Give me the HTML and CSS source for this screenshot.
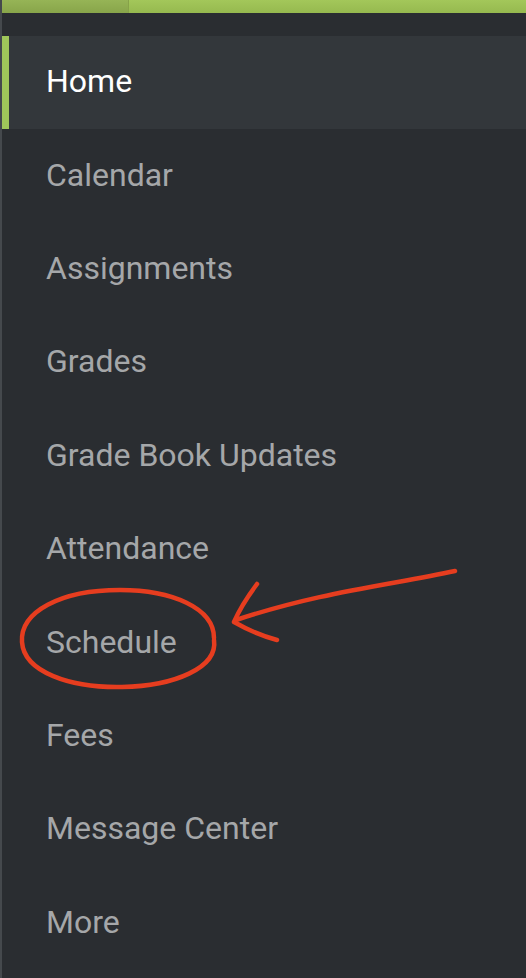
FILE: index.html
```html
<!DOCTYPE html>
<html lang="en">
<head>
  <meta charset="UTF-8">
  <title>Menu</title>
  <link rel="stylesheet" href="styles.css">
</head>
<body>
  <div class="topbar">
    <div class="topbar-tab"></div>
  </div>

  <nav class="side-nav">
    <a class="nav-item active" href="#">Home</a>
    <a class="nav-item" href="#">Calendar</a>
    <a class="nav-item" href="#">Assignments</a>
    <a class="nav-item" href="#">Grades</a>
    <a class="nav-item" href="#">Grade Book Updates</a>
    <a class="nav-item" href="#">Attendance</a>
    <a class="nav-item" href="#">Schedule</a>
    <a class="nav-item" href="#">Fees</a>
    <a class="nav-item" href="#">Message Center</a>
    <a class="nav-item" href="#">More</a>
  </nav>

  <!-- hand drawn annotation over the menu -->
  <svg class="markup" width="526" height="978" viewBox="0 0 526 978">
    <g fill="none" stroke="#e63d1f" stroke-width="4.5" stroke-linecap="round" stroke-linejoin="round">
      <path d="M214 638 C 214 608, 172 590, 120 590 C 60 590, 20 612, 22 642 C 24 672, 70 688, 122 687 C 174 686, 218 668, 214 640"/>
      <path d="M455 571 C 390 585, 320 592, 236 620"/>
      <path d="M257 584 C 248 596, 240 608, 234 622 C 248 630, 262 636, 277 640"/>
    </g>
  </svg>
</body>
</html>
```

FILE: styles.css
```css
html, body {
  margin: 0;
  padding: 0;
}
body {
  background-color: #2a2d31;
  font-family: Roboto, "Liberation Sans", sans-serif;
  width: 526px;
  height: 978px;
  overflow: hidden;
  position: relative;
  border-left: 2px solid #45494d;
  box-sizing: border-box;
}
.topbar {
  height: 13px;
  margin-left: -2px;
  background: linear-gradient(#a3c75a, #96b94f);
  display: flex;
}
.topbar-tab {
  width: 128px;
  height: 100%;
  background: linear-gradient(#96b456, #88a54a);
  border-right: 1px solid #86a248;
}
.side-nav {
  display: flex;
  flex-direction: column;
  padding-top: 23px;
}
.nav-item {
  display: flex;
  align-items: center;
  height: 93.4px;
  padding-left: 44px;
  padding-bottom: 3px;
  color: #a5a7a9;
  font-size: 32px;
  text-decoration: none;
  box-sizing: border-box;
}
.nav-item.active {
  background-color: #33373b;
  color: #ffffff;
  margin-left: -2px;
  padding-left: 37px;
  border-left: 9px solid #9fc65a;
}
.markup {
  position: absolute;
  left: -2px;
  top: 0;
  pointer-events: none;
}
```
